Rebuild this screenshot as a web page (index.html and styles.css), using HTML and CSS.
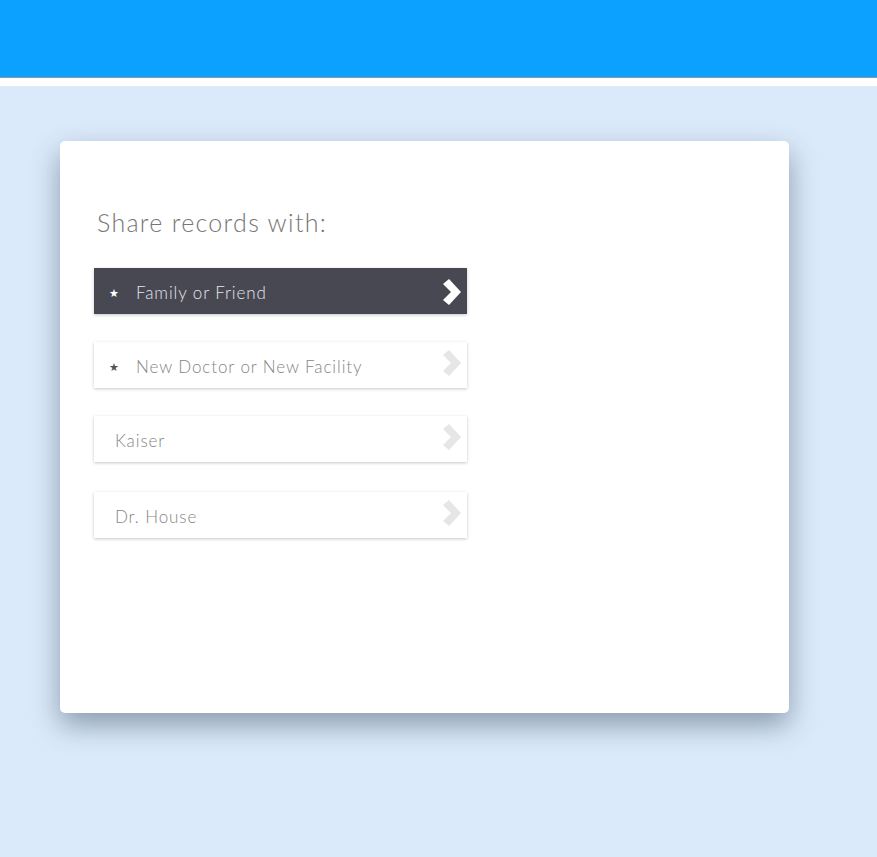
FILE: index.html
```html
<!DOCTYPE html>
<html lang="en">
  <head>
    <meta charset="UTF-8" />
    <meta name="viewport" content="width=device-width, initial-scale=1.0" />
    <title>Share Records</title>
    <link rel="stylesheet" href="styles.css">
  </head>
  <body>
    <header class="topbar"></header>
    <main class="content">
      <section class="card">
        <h2 class="card-title">Share records with:</h2>
        <ul class="share-list">
          <li class="share-item active">
            <span class="star">&#9733;</span>
            <span class="label">Family or Friend</span>
            <svg class="chevron" viewBox="0 0 20 26"><path d="M2 5 L8 0 L20 13 L8 26 L2 21 L10 13 Z"/></svg>
          </li>
          <li class="share-item">
            <span class="star">&#9733;</span>
            <span class="label">New Doctor or New Facility</span>
            <svg class="chevron" viewBox="0 0 20 26"><path d="M2 5 L8 0 L20 13 L8 26 L2 21 L10 13 Z"/></svg>
          </li>
          <li class="share-item plain">
            <span class="label">Kaiser</span>
            <svg class="chevron" viewBox="0 0 20 26"><path d="M2 5 L8 0 L20 13 L8 26 L2 21 L10 13 Z"/></svg>
          </li>
          <li class="share-item plain last">
            <span class="label">Dr. House</span>
            <svg class="chevron" viewBox="0 0 20 26"><path d="M2 5 L8 0 L20 13 L8 26 L2 21 L10 13 Z"/></svg>
          </li>
        </ul>
      </section>
    </main>
  </body>
</html>
```

FILE: styles.css
```css
body {
  margin: 0;
  background: #ffffff;
  font-family: Lato, "Open Sans", sans-serif;
}

.topbar {
  height: 77px;
  background-color: #0ca0ff;
  border-bottom: 1px solid #8c9aa6;
  margin-bottom: 8px;
}

.content {
  background-color: #dbeafa;
  padding: 55px 88px 0 60px;
  height: 771px;
  box-sizing: border-box;
}

.card {
  background: #ffffff;
  border-radius: 5px;
  height: 572px;
  padding: 66px 34px 0 34px;
  box-sizing: border-box;
  box-shadow: 0 12px 28px rgba(40, 60, 85, 0.45);
}

.card-title {
  margin: 0 0 31px 3px;
  font-size: 25px;
  font-weight: 300;
  letter-spacing: 1.3px;
  color: #767676;
}

.share-list {
  list-style: none;
  margin: 0;
  padding: 0;
  width: 373px;
}

.share-item {
  display: flex;
  align-items: center;
  height: 46px;
  margin-bottom: 28px;
  padding: 0 6px 0 15px;
  background: #ffffff;
  box-shadow: 0 1px 3px rgba(0, 0, 0, 0.22);
  color: #858585;
}

.share-item.plain {
  padding-left: 21px;
}

.share-item.last {
  margin-top: 30px;
}

.share-item.active {
  background: #484853;
  color: #e6e6ea;
}

.star {
  font-size: 11px;
  width: 27px;
  color: #555;
  margin-top: 3px;
}

.active .star {
  color: #ffffff;
}

.label {
  flex: 1;
  font-size: 17px;
  font-weight: 300;
  letter-spacing: 0.9px;
  margin-top: 2px;
}

.chevron {
  width: 20px;
  height: 26px;
  fill: #e6e6e6;
  margin-top: -4px;
}

.active .chevron {
  fill: #ffffff;
  margin-top: 2px;
}
```
